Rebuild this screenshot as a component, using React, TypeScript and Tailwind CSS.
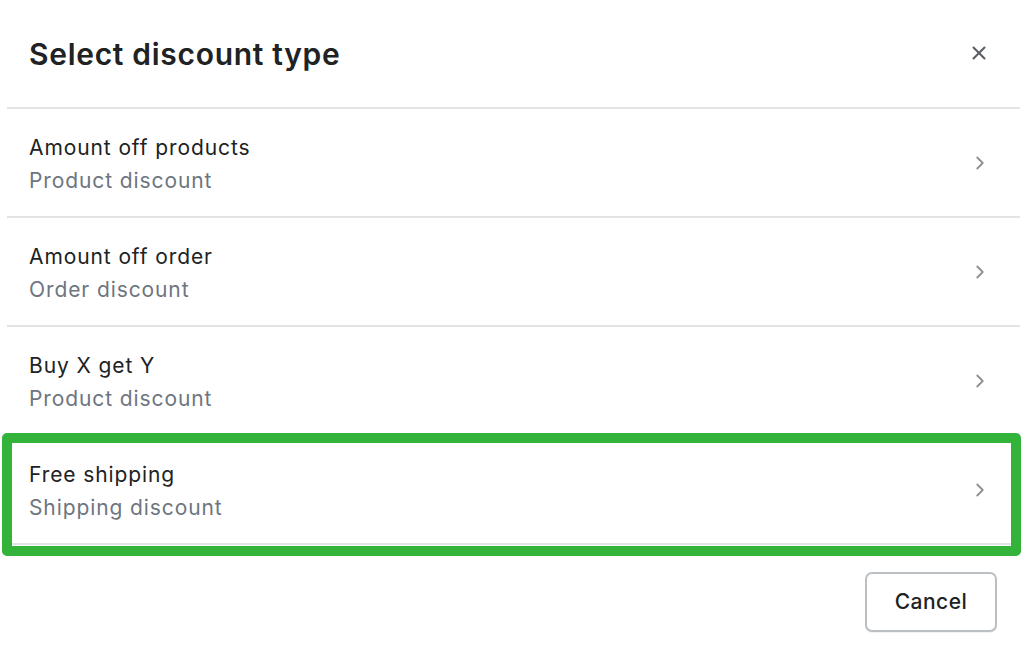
import { ChevronRight, X } from "lucide-react";

type DiscountOption = {
	title: string;
	subtitle: string;
	highlighted?: boolean;
};

const options: DiscountOption[] = [
	{ title: "Amount off products", subtitle: "Product discount" },
	{ title: "Amount off order", subtitle: "Order discount" },
	{ title: "Buy X get Y", subtitle: "Product discount" },
	{ title: "Free shipping", subtitle: "Shipping discount", highlighted: true },
];

function OptionRow({ option }: { option: DiscountOption }) {
	return (
		<div className="relative">
			<button
				type="button"
				className="flex h-[109px] w-full items-center justify-between border-b-2 border-[#e1e3e5] pl-[22px] pr-[29px] pt-[3px] text-left"
			>
				<div className="flex flex-col">
					<span className="text-[21px] leading-[33px] tracking-[0.9px] text-[#202223]">
						{option.title}
					</span>
					<span className="text-[21px] leading-[33px] tracking-[0.9px] text-[#6d7580]">
						{option.subtitle}
					</span>
				</div>
				<ChevronRight
					className="-mt-[3px] h-[22px] w-[22px] text-[#8c9196]"
					strokeWidth={2}
				/>
			</button>
			{option.highlighted ? (
				<div className="pointer-events-none absolute -left-[5px] -right-[1px] -top-[3px] -bottom-[11px] rounded-[5px] border-[10px] border-[#34b33a]" />
			) : null}
		</div>
	);
}

export default function App() {
	return (
		<div
			className="h-[648px] w-[1024px] overflow-hidden bg-white"
			style={{ fontFamily: "Inter, 'Liberation Sans', sans-serif" }}
		>
			<div className="ml-[7px] mr-[4px]">
				<header className="flex h-[109px] items-center justify-between border-b-2 border-[#e1e3e5] pl-[22px] pr-[30px]">
					<h1 className="pt-[1px] text-[30px] font-semibold tracking-[0.7px] text-[#202223]">
						Select discount type
					</h1>
					<button type="button" className="-mt-[2px] text-[#5c5f62]">
						<X className="h-[22px] w-[22px]" strokeWidth={2.25} />
					</button>
				</header>
				{options.map((option) => (
					<OptionRow key={option.title} option={option} />
				))}
				<div className="flex justify-end pr-[23px] pt-[27px]">
					<button
						type="button"
						className="h-[60px] w-[132px] rounded-[7px] border-2 border-[#babfc3] bg-white text-[21px] font-medium tracking-[0.5px] text-[#202223] shadow-[0_1px_0_rgba(0,0,0,0.05)]"
					>
						Cancel
					</button>
				</div>
			</div>
		</div>
	);
}
